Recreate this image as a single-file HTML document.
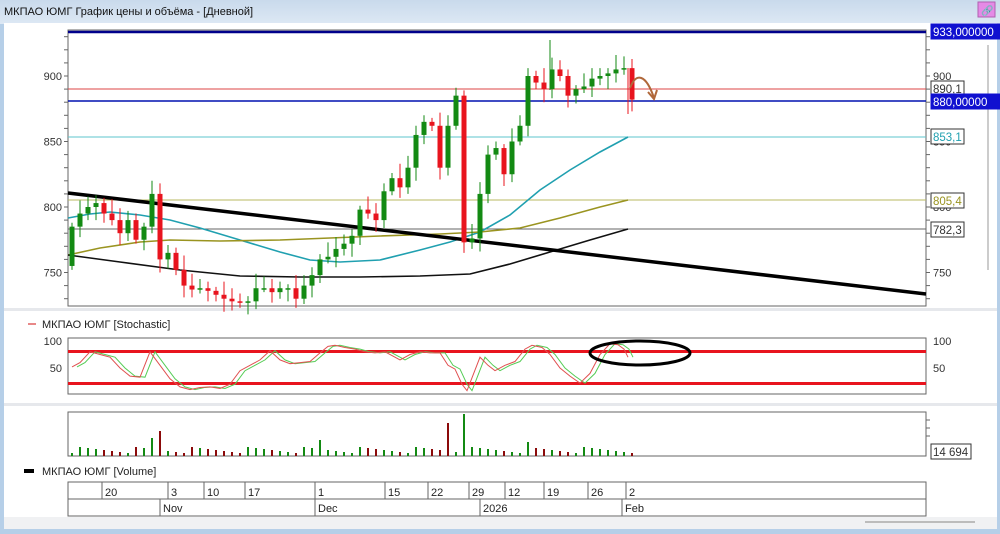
<!DOCTYPE html>
<html><head><meta charset="utf-8"><style>
html,body{margin:0;padding:0;width:1000px;height:534px;overflow:hidden;background:#bcd3ea}
svg{display:block}
text{font-family:"Liberation Sans","DejaVu Sans",sans-serif}
</style></head><body>
<svg id="s" width="1000" height="534" xmlns="http://www.w3.org/2000/svg">
<defs><linearGradient id="tb" x1="0" y1="0" x2="0" y2="1"><stop offset="0" stop-color="#c9daec"/><stop offset="1" stop-color="#dde8f4"/></linearGradient></defs>
<rect x="0" y="0" width="1000" height="534" fill="#b6cfe8"/>
<rect x="0" y="0" width="1000" height="24" fill="url(#tb)"/>
<text x="4" y="15" font-size="11" fill="#111">МКПАО ЮМГ График цены и объёма - [Дневной]</text>
<rect x="978" y="2" width="17" height="15" fill="#e58ae6" stroke="#b060b0"/>
<text x="981" y="14" font-size="10" fill="#333">🔗</text>
<rect x="4" y="23" width="993" height="506" fill="#ffffff"/>
<rect x="4" y="308" width="993" height="3" fill="#e6e8ec"/>
<rect x="4" y="403" width="993" height="3" fill="#e6e8ec"/>
<rect x="4" y="517" width="993" height="12" fill="#f0f1f3"/>
<line x1="865" y1="522" x2="975" y2="522" stroke="#aaa" stroke-width="1.5"/>
<line x1="988" y1="45" x2="988" y2="270" stroke="#ccc" stroke-width="2"/>
<!-- main box -->
<g id="main"></g>
</svg>
<script>
const s=document.getElementById('s'),NS='http://www.w3.org/2000/svg';
function el(t,a,txt){const e=document.createElementNS(NS,t);for(const k in a)e.setAttribute(k,a[k]);if(txt!==undefined)e.textContent=txt;s.appendChild(e);return e}
const Y=p=>76+(900-p)*1.31;
// frames
el('rect',{x:68,y:30,width:858,height:276,fill:'none',stroke:'#666'});
// left/right ticks
for(let p=730;p<=930;p+=10){const y=Y(p);el('line',{x1:64,y1:y,x2:68,y2:y,stroke:'#666'});el('line',{x1:926,y1:y,x2:930,y2:y,stroke:'#666'});}
[[900],[850],[800],[750]].forEach(([p])=>{el('text',{x:62,y:Y(p)+4,'font-size':11,'text-anchor':'end',fill:'#333'},p);el('text',{x:933,y:Y(p)+4,'font-size':11,fill:'#333'},p);});
// horizontal lines
el('line',{x1:68,y1:32,x2:926,y2:32,stroke:'#00008b','stroke-width':2.5});
el('line',{x1:68,y1:89,x2:926,y2:89,stroke:'#d44','stroke-width':1});
el('line',{x1:68,y1:101,x2:926,y2:101,stroke:'#0010b0','stroke-width':1.6});
el('line',{x1:68,y1:137,x2:926,y2:137,stroke:'#5cc6cc','stroke-width':1});
el('line',{x1:68,y1:200,x2:926,y2:200,stroke:'#b8b860','stroke-width':1});
el('line',{x1:68,y1:229,x2:926,y2:229,stroke:'#666','stroke-width':1});
// MAs
el('polyline',{points:'68,218 90,214 110,212 140,215 170,220 200,228 240,240 280,252 310,260 340,262 380,260 420,250 450,242 480,232 510,215 540,190 570,170 600,152 628,137',fill:'none',stroke:'#20a0b0','stroke-width':1.6});
el('polyline',{points:'68,255 100,248 140,242 170,240 220,241 280,240 330,238 380,236 440,234 480,232 520,228 560,218 600,207 628,200',fill:'none',stroke:'#9a9420','stroke-width':1.6});
el('polyline',{points:'68,255 120,262 180,270 240,276 300,277 360,277 420,276 470,274 510,264 550,252 590,240 628,229',fill:'none',stroke:'#111','stroke-width':1.6});
// trendline
el('line',{x1:68,y1:193,x2:926,y2:294,stroke:'#000','stroke-width':3.5});
// candles
const cl=[785,795,800,803,795,790,780,790,775,785,810,760,765,752,740,737,738,736,733,730,728,727,728,738,738,735,738,738,730,740,748,760,762,768,772,778,798,795,790,812,822,815,830,855,865,862,830,862,885,773,776,810,840,845,825,850,862,900,895,890,905,900,885,890,892,898,900,902,905,906,882];
let prev=755;const vols=[];
cl.forEach((c,i)=>{const x=72+i*8;const o=prev;const up=c>=o;const col=up?'#138a13':'#e8141e';
 const hi=Math.max(o,c)+3+((i*7)%9),lo=Math.min(o,c)-3-((i*5)%8);
 el('line',{x1:x,y1:Y(hi),x2:x,y2:Y(lo),stroke:col,'stroke-width':1});
 const yt=Y(Math.max(o,c)),h=Math.max(1.5,Math.abs(Y(o)-Y(c)));
 el('rect',{x:x-2.5,y:yt,width:5,height:h,fill:col});
 vols.push([x,up]);prev=c;});
// special long wicks
el('line',{x1:550,y1:40,x2:550,y2:90,stroke:'#138a13'});
el('line',{x1:628,y1:68,x2:628,y2:114,stroke:'#e8141e'});
// brown arrow
el('path',{d:'M630,88 C636,72 646,74 654,98',fill:'none',stroke:'#b0683a','stroke-width':2});
el('path',{d:'M648,92 L654,99 L657,90',fill:'none',stroke:'#b0683a','stroke-width':2});
// right labels
function box(x,y,w,t,bg,fg,bd){el('rect',{x:x,y:y,width:w,height:15,fill:bg,stroke:bd||bg});el('text',{x:x+2,y:y+12,'font-size':11.5,fill:fg},t);}
box(931,24,70,'933,000000','#1010d0','#fff');
box(931,81,33,'890,1','#fff','#333','#333');
box(931,94,70,'880,00000','#1010d0','#fff');
box(931,129,33,'853,1','#fff','#20a0b0','#333');
box(931,193,33,'805,4','#fff','#9a9420','#333');
box(931,222,33,'782,3','#fff','#333','#333');
// stochastic
el('line',{x1:28,y1:324,x2:36,y2:324,stroke:'#e06060','stroke-width':1.5});
el('text',{x:42,y:328,'font-size':11,fill:'#222'},'МКПАО ЮМГ [Stochastic]');
el('rect',{x:68,y:338,width:858,height:56,fill:'none',stroke:'#666'});
el('text',{x:62,y:345,'font-size':11,'text-anchor':'end',fill:'#333'},'100');
el('text',{x:62,y:372,'font-size':11,'text-anchor':'end',fill:'#333'},'50');
el('text',{x:933,y:345,'font-size':11,fill:'#333'},'100');
el('text',{x:933,y:372,'font-size':11,fill:'#333'},'50');
el('rect',{x:68,y:350,width:858,height:3,fill:'#e8141e'});
el('rect',{x:68,y:382,width:858,height:3,fill:'#e8141e'});
const sv=v=>395-0.54*v;
const rp=[[72,52],[80,60],[90,80],[100,75],[110,70],[120,50],[130,35],[140,33],[150,80],[160,55],[170,30],[180,15],[190,10],[200,14],[210,15],[220,12],[230,20],[240,45],[250,55],[260,65],[270,82],[280,65],[290,58],[300,60],[310,62],[320,78],[328,90],[335,92],[345,88],[355,85],[365,80],[375,78],[385,80],[395,70],[400,65],[410,75],[420,80],[430,78],[440,78],[448,55],[455,48],[462,20],[467,8],[480,70],[488,55],[495,45],[505,55],[515,62],[525,85],[532,92],[542,88],[550,75],[560,50],[570,35],[580,22],[590,40],[600,75],[610,95],[618,93],[624,85],[628,70]];
el('polyline',{points:rp.map(p=>(p[0]+5)+','+sv(p[1])).join(' '),fill:'none',stroke:'#55cc55','stroke-width':1});
el('polyline',{points:rp.map(p=>p[0]+','+sv(p[1])).join(' '),fill:'none',stroke:'#e05050','stroke-width':1});
el('ellipse',{cx:640,cy:353,rx:50,ry:12,fill:'none',stroke:'#000','stroke-width':3});
// volume
el('rect',{x:68,y:412,width:858,height:44,fill:'none',stroke:'#666'});
[420,428,436].forEach(y=>el('line',{x1:926,y1:y,x2:930,y2:y,stroke:'#666'}));
const special={10:18,11:25,31:16,47:33,49:42,57:14};
vols.forEach(([x,up],i)=>{let h=special[i]||(3+((i*13)%7));if(i==47)up=false;if(i==49)up=true;
 el('rect',{x:x-1,y:456-h,width:2,height:h,fill:up?'#138a13':'#8b0a0a'});});
box(931,444,40,'14 694','#fff','#333','#333');
el('rect',{x:24,y:469,width:10,height:4,fill:'#000'});
el('text',{x:42,y:475,'font-size':11,fill:'#222'},'МКПАО ЮМГ [Volume]');
// date axis
el('rect',{x:68,y:482,width:858,height:34,fill:'none',stroke:'#666'});
el('line',{x1:68,y1:499,x2:926,y2:499,stroke:'#666'});
[[102,'20'],[168,'3'],[204,'10'],[245,'17'],[315,'1'],[385,'15'],[428,'22'],[469,'29'],[505,'12'],[544,'19'],[588,'26'],[626,'2']].forEach(([x,t])=>{el('line',{x1:x,y1:482,x2:x,y2:499,stroke:'#666'});el('text',{x:x+3,y:496,'font-size':11,fill:'#222'},t);});
[[160,'Nov'],[315,'Dec'],[480,'2026'],[622,'Feb']].forEach(([x,t])=>{el('line',{x1:x,y1:499,x2:x,y2:516,stroke:'#666'});el('text',{x:x+3,y:512,'font-size':11,fill:'#222'},t);});
</script>
</body></html>
